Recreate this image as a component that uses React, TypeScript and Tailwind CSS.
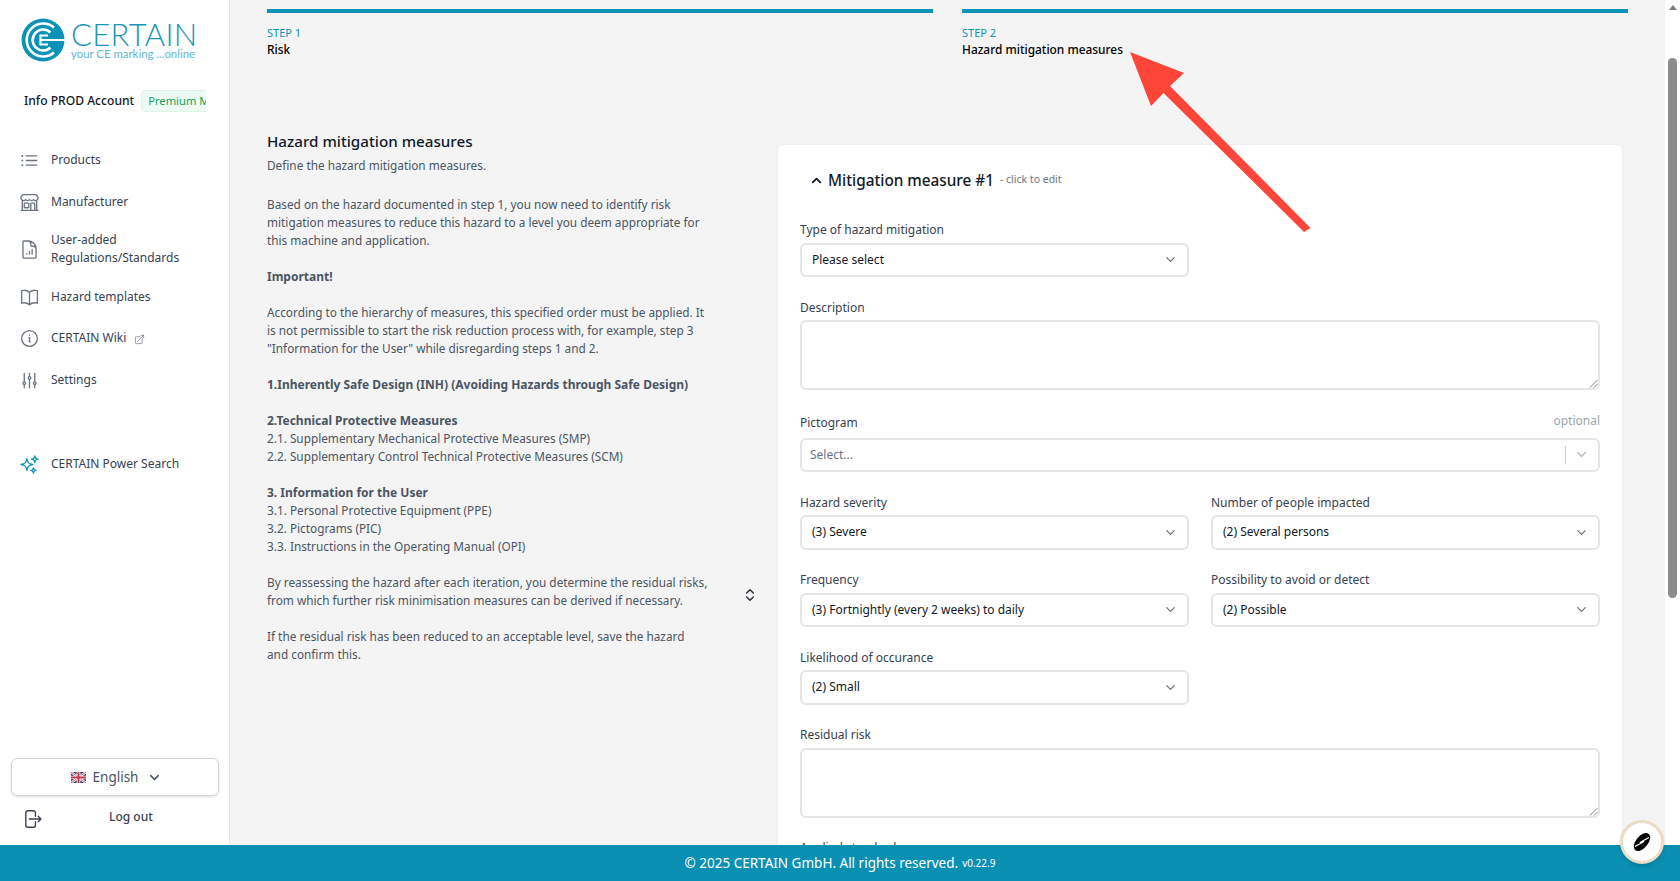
import type React from 'react';
import { ChevronDown, ChevronUp, ChevronsUpDown } from 'lucide-react';
import {
  HiOutlineAdjustmentsVertical,
  HiOutlineArrowRightOnRectangle,
  HiOutlineArrowTopRightOnSquare,
  HiOutlineBookOpen,
  HiOutlineBuildingStorefront,
  HiOutlineDocumentChartBar,
  HiOutlineInformationCircle,
  HiOutlineListBullet,
  HiOutlineSparkles,
} from 'react-icons/hi2';

const Logo: React.FC = () => (
  <div className="flex items-start pl-[21px] pt-[18px]">
    <svg width="44" height="44" viewBox="0 0 44 44" className="shrink-0">
      <circle cx="22" cy="22" r="21.5" fill="#0b93b5" />
      <path d="M33 9.500A16.500 16.500 0 1 0 33 34.500" fill="none" stroke="#fff" strokeWidth="2.6" />
      <path d="M29.500 14.500A10.500 10.500 0 1 0 29.500 29.500" fill="none" stroke="#fff" strokeWidth="2.6" />
      <path d="M27 17.500h-7.500v9H27M19.500 22H44" fill="none" stroke="#fff" strokeWidth="2.2" />
    </svg>
    <div className="ml-[6px] flex flex-col font-['Lato',sans-serif] text-[#1a95b5]">
      <span className="mt-[2px] text-[31px] font-light leading-[28px] tracking-[0.3px]">CERTAIN</span>
      <span className="whitespace-nowrap text-[11.4px] leading-[12px] text-[#5fb6cf]">your CE marking ...online</span>
    </div>
  </div>
);

const UkFlag: React.FC = () => (
  <svg width="15" height="11" viewBox="0 0 14 11" className="shrink-0" preserveAspectRatio="none">
    <rect width="14" height="11" fill="#2b3a75" />
    <path d="M0 0l14 11M14 0L0 11" stroke="#fff" strokeWidth="2.2" />
    <path d="M0 0l14 11M14 0L0 11" stroke="#c8314a" strokeWidth="0.8" />
    <path d="M7 0v11M0 5.500h14" stroke="#fff" strokeWidth="3.4" />
    <path d="M7 0v11M0 5.500h14" stroke="#c8314a" strokeWidth="1.8" />
  </svg>
);

interface NavItem {
  label: React.ReactNode;
  icon: React.ReactNode;
  className: string;
}

const iconClass = 'h-[21px] w-[21px] shrink-0 text-[#6b7280]';

const navItems: NavItem[] = [
  { label: 'Products', icon: <HiOutlineListBullet className={iconClass} />, className: 'h-[20px] mt-0' },
  { label: 'Manufacturer', icon: <HiOutlineBuildingStorefront className={iconClass} />, className: 'h-[20px] mt-[22px]' },
  {
    label: (
      <>
        User-added
        <br />
        Regulations/Standards
      </>
    ),
    icon: <HiOutlineDocumentChartBar className={iconClass} />,
    className: 'h-[36px] mt-[19px]',
  },
  { label: 'Hazard templates', icon: <HiOutlineBookOpen className={iconClass} />, className: 'h-[20px] mt-[20px]' },
  {
    label: (
      <span className="flex items-center">
        CERTAIN Wiki
        <HiOutlineArrowTopRightOnSquare className="ml-[8px] mt-[2px] h-[11px] w-[11px] text-[#6b7280]" />
      </span>
    ),
    icon: <HiOutlineInformationCircle className={iconClass} />,
    className: 'h-[20px] mt-[21px]',
  },
  { label: 'Settings', icon: <HiOutlineAdjustmentsVertical className={iconClass} />, className: 'h-[20px] mt-[22px]' },
  {
    label: 'CERTAIN Power Search',
    icon: <HiOutlineSparkles className="h-[21px] w-[21px] shrink-0 text-[#0b93b5]" />,
    className: 'h-[20px] mt-[64px]',
  },
];

const Sidebar: React.FC = () => (
  <aside className="flex w-[230px] shrink-0 flex-col border-r border-[#e8e8e8] bg-white">
    <Logo />
    <div className="mt-[28px] flex items-center pl-[24px]">
      <span className="text-[12.1px] font-medium leading-[20px] text-[#111827]">Info PROD Account</span>
      <div className="ml-[7px] h-[22px] w-[65px] overflow-hidden whitespace-nowrap rounded-l-[5px] border border-r-0 border-[#d9f5e5] bg-[#edfcf3] pl-[6px] text-[11.2px] leading-[20px] text-[#15a05a]">
        Premium Membership
      </div>
    </div>
    <nav className="mt-[38px] flex flex-col pl-[19px]">
      {navItems.map((item, i) => (
        <div key={i} className={`flex items-center ${item.className}`}>
          {item.icon}
          <span className="ml-[11px] text-[12px] leading-[18px] text-[#374151]">{item.label}</span>
        </div>
      ))}
    </nav>
    <div className="mt-auto pb-[15px] pl-[11px] pr-[10px]">
      <div className="flex h-[38px] items-center justify-center rounded-md border border-[#d1d5db] pl-[3px] shadow-sm">
        <UkFlag />
        <span className="ml-[7px] text-[13.5px] text-[#4b5563]">English</span>
        <ChevronDown className="ml-[9px] h-[15px] w-[15px] text-[#4b5563]" strokeWidth={2.5} />
      </div>
      <div className="mt-[12px] flex items-start pl-[10px]">
        <HiOutlineArrowRightOnRectangle className="h-[22px] w-[22px] text-[#374151]" />
        <span className="ml-[66px] text-[12px] font-medium leading-[18px] text-[#374151]">Log out</span>
      </div>
    </div>
  </aside>
);

const Step: React.FC<{ step: string; title: string }> = ({ step, title }) => (
  <div className="border-t-4 border-[#0d94b6] pt-[12px]">
    <div className="text-[11px] leading-[16px] text-[#0d94b6]">{step}</div>
    <div className="text-[11.9px] font-medium leading-[17px] text-black">{title}</div>
  </div>
);

const Field: React.FC<{ label: string; children: React.ReactNode; optional?: boolean }> = ({
  label,
  children,
  optional,
}) => (
  <div className="flex min-w-0 flex-col">
    <div className="mb-[2.5px] flex h-[20px] items-center justify-between text-[12px] text-[#374151]">
      <span>{label}</span>
      {optional && <span className="-mt-[3px] text-[12px] text-[#9ca3af]">optional</span>}
    </div>
    {children}
  </div>
);

const Select: React.FC<{ value: string }> = ({ value }) => (
  <div className="flex h-[34.5px] items-center justify-between rounded-md border-2 border-[#e5e5e5] bg-white pl-[10px] pr-[9px] text-[12px] text-[#111827]">
    <span>{value}</span>
    <ChevronDown className="h-[15px] w-[15px] text-[#6b7280]" strokeWidth={2} />
  </div>
);

const TextArea: React.FC = () => (
  <div className="relative h-[70px] rounded-md border-2 border-[#e5e5e5] bg-white">
    <svg width="9" height="9" viewBox="0 0 9 9" className="absolute bottom-0 right-0">
      <path d="M1 8.500L8.500 1M5 8.500L8.500 5" stroke="#6b7280" strokeWidth="0.9" />
    </svg>
  </div>
);

const LeftText: React.FC = () => (
  <div className="w-[465px] shrink-0 whitespace-nowrap pr-[14px] text-[11.8px] leading-[18px] text-[#4b5563]">
    <h2 className="mb-[5px] text-[15.2px] font-medium leading-[20px] text-[#111827]">Hazard mitigation measures</h2>
    <p>Define the hazard mitigation measures.</p>
    <p className="mt-[21px]">
      Based on the hazard documented in step 1, you now need to identify risk
      <br />
      mitigation measures to reduce this hazard to a level you deem appropriate for
      <br />
      this machine and application.
    </p>
    <p className="mt-[19px] text-[12px] font-bold">Important!</p>
    <p className="mt-[17px]">
      According to the hierarchy of measures, this specified order must be applied. It
      <br />
      is not permissible to start the risk reduction process with, for example, step 3
      <br />
      "Information for the User" while disregarding steps 1 and 2.
    </p>
    <p className="mt-[19px] text-[12px] font-bold">1.Inherently Safe Design (INH) (Avoiding Hazards through Safe Design)</p>
    <p className="mt-[18px] text-[12px] font-bold">2.Technical Protective Measures</p>
    <p className="-mt-[1px]">2.1. Supplementary Mechanical Protective Measures (SMP)</p>
    <p>2.2. Supplementary Control Technical Protective Measures (SCM)</p>
    <p className="mt-[19px] text-[12px] font-bold">3. Information for the User</p>
    <p className="-mt-[1px]">3.1. Personal Protective Equipment (PPE)</p>
    <p>3.2. Pictograms (PIC)</p>
    <p>3.3. Instructions in the Operating Manual (OPI)</p>
    <p className="mt-[18px]">
      By reassessing the hazard after each iteration, you determine the residual risks,
      <br />
      from which further risk minimisation measures can be derived if necessary.
    </p>
    <p className="mt-[18px]">
      If the residual risk has been reduced to an acceptable level, save the hazard
      <br />
      and confirm this.
    </p>
  </div>
);

const MeasureCard: React.FC = () => (
  <div className="w-[846px] shrink-0 rounded-t-md border border-b-0 border-[#f0f0f0] bg-white pb-[40px] pl-[22px] pr-[22px] pt-[23px]">
    <div className="flex h-[24px] items-center pl-[9px]">
      <ChevronUp className="h-[15px] w-[15px] text-[#111827]" strokeWidth={3} />
      <span className="ml-[4px] text-[15.3px] font-medium text-[#111827]">Mitigation measure #1</span>
      <span className="ml-[6px] text-[10.5px] text-[#6b7280]">- click to edit</span>
    </div>
    <div className="mt-[28px] flex flex-col gap-[20.5px]">
      <div className="grid grid-cols-2 gap-x-[22px]">
        <Field label="Type of hazard mitigation">
          <Select value="Please select" />
        </Field>
      </div>
      <Field label="Description">
        <TextArea />
      </Field>
      <div className="mt-[2px]">
        <Field label="Pictogram" optional>
          <div className="mt-[2.5px] flex h-[34.5px] items-center rounded-md border-2 border-[#e5e5e5] bg-white pl-[8px] pr-[9px] text-[12px] text-[#6b7280]">
            <span className="flex-1">Select...</span>
            <span className="mr-[8px] h-[18px] w-px bg-[#cccccc]" />
            <ChevronDown className="h-[15px] w-[15px] text-[#c4c4c4]" strokeWidth={2.5} />
          </div>
        </Field>
      </div>
      <div className="grid grid-cols-2 gap-x-[22px] gap-y-[20.5px]">
        <Field label="Hazard severity">
          <Select value="(3) Severe" />
        </Field>
        <Field label="Number of people impacted">
          <Select value="(2) Several persons" />
        </Field>
        <Field label="Frequency">
          <Select value="(3) Fortnightly (every 2 weeks) to daily" />
        </Field>
        <Field label="Possibility to avoid or detect">
          <Select value="(2) Possible" />
        </Field>
        <Field label="Likelihood of occurance">
          <Select value="(2) Small" />
        </Field>
      </div>
      <Field label="Residual risk">
        <TextArea />
      </Field>
      <Field label="Applied standards">
        <TextArea />
      </Field>
    </div>
  </div>
);

const ScrollTrack: React.FC = () => (
  <div className="flex w-[15px] shrink-0 flex-col items-center bg-white">
    <div className="mt-[5px] h-0 w-0 border-x-[4px] border-b-[5px] border-x-transparent border-b-[#7c7c7c]" />
    <div className="mt-[48px] h-[540px] w-[9px] rounded-full bg-[#8b8b8b]" />
  </div>
);

export default function App() {
  return (
    <div className="relative flex h-screen flex-col overflow-hidden bg-[#f4f4f4] font-['Noto_Sans',sans-serif]">
      <div className="flex min-h-0 flex-1">
        <Sidebar />
        <main className="min-w-0 flex-1 overflow-hidden px-[37px] pt-[9px]">
          <div className="grid grid-cols-2 gap-x-[29px]">
            <Step step="STEP 1" title="Risk" />
            <Step step="STEP 2" title="Hazard mitigation measures" />
          </div>
          <div className="mt-[71px] flex items-start">
            <div className="relative flex shrink-0 pt-[2px]">
              <LeftText />
              <ChevronsUpDown className="absolute left-[475px] top-[458px] h-[16px] w-[16px] text-[#1f2937]" />
            </div>
            <div className="ml-[45px] mt-[15px]">
              <MeasureCard />
            </div>
          </div>
        </main>
        <ScrollTrack />
      </div>
      <footer className="flex h-[36px] shrink-0 items-center justify-center bg-[#0a90b3] text-[13.5px] text-white">
        © 2025 CERTAIN GmbH. All rights reserved.
        <span className="ml-[4px] text-[10px]">v0.22.9</span>
      </footer>

      {/* screenshot annotation arrow */}
      <svg className="pointer-events-none absolute left-0 top-0" width="1680" height="881">
        <polygon
          points="1130,52 1184,73 1170,86 1310.5,228 1304,232 1163.5,93 1151,106"
          fill="#ff4538"
        />
      </svg>

      <div className="absolute left-[1620px] top-[820px] flex h-[44px] w-[44px] items-center justify-center rounded-full border-[3px] border-[#ecdcc5] bg-white shadow-md">
        <svg width="18" height="20" viewBox="0 0 18 20">
          <ellipse cx="9" cy="10" rx="6" ry="10.500" transform="rotate(40 9 10)" fill="#000" />
          <path d="M2 14.500L11 9.500 7 10.500 16 5.500" fill="none" stroke="#fff" strokeWidth="1.3" />
        </svg>
      </div>
    </div>
  );
}
